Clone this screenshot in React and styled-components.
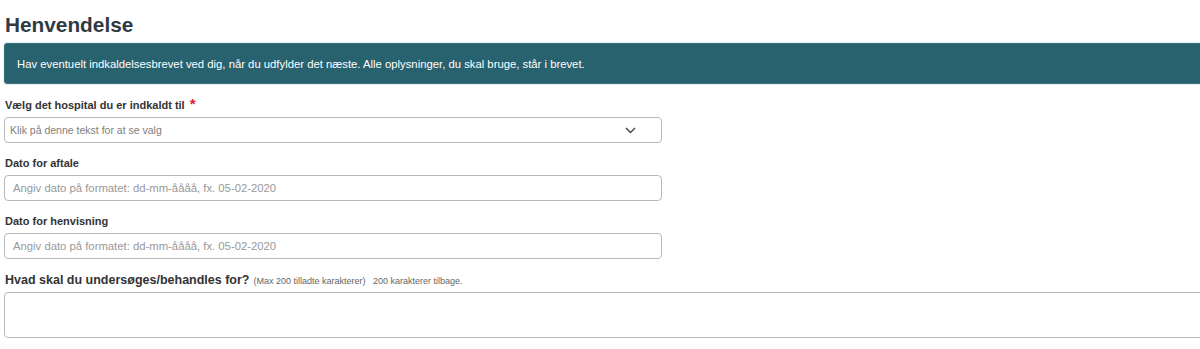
import React from "react";
import styled, { createGlobalStyle } from "styled-components";

const GlobalStyle = createGlobalStyle`
  html, body {
    margin: 0;
    padding: 0;
    background: #fff;
    font-family: "Liberation Sans", Arial, sans-serif;
    color: #333;
  }
  * {
    box-sizing: border-box;
  }
`;

const Page = styled.main`
  padding: 13px 0 0 4px;
  width: 1210px;
`;

const Heading = styled.h1`
  margin: 0 0 6px 1px;
  font-size: 20.8px;
  line-height: 24px;
  font-weight: bold;
  color: #2f3a44;
`;

const Banner = styled.div`
  height: 41px;
  display: flex;
  align-items: center;
  padding: 0 12px;
  background-color: #28626f;
  border: 1px solid #3d6f7a;
  border-radius: 3px;
  box-shadow: 0 0 0 1px #dff3f6;
  color: #fff;
  font-size: 11.3px;
`;

const Form = styled.form`
  display: flex;
  flex-direction: column;
  gap: 12px;
  margin-top: 13px;
`;

const Field = styled.div`
  display: flex;
  flex-direction: column;
  gap: 5px;
`;

const Label = styled.label`
  display: flex;
  align-items: baseline;
  margin-left: 1px;
  margin-top: ${({ $big }) => ($big ? "2px" : "1px")};
  margin-bottom: ${({ $big }) => ($big ? "-2px" : "-1px")};
  font-size: ${({ $big }) => ($big ? "12.5px" : "11px")};
  line-height: 15px;
  font-weight: bold;
  color: #333;
`;

const Required = styled.span`
  margin-left: 5px;
  color: #d9232e;
  font-size: 15px;
  line-height: 10px;
`;

const Hint = styled.span`
  margin-left: 4px;
  font-size: 9px;
  font-weight: normal;
  color: #666;
  white-space: pre;
`;

const Box = styled.div`
  width: ${({ $full }) => ($full ? "100%" : "658px")};
  height: ${({ $tall }) => ($tall ? "46px" : "26px")};
  display: flex;
  align-items: center;
  justify-content: space-between;
  padding: ${({ $select }) => ($select ? "0 25px 0 5px" : "0 8px")};
  border: 1px solid #b9b9b9;
  border-radius: 4px;
  background: #fff;
  font-size: ${({ $select }) => ($select ? "10.5px" : "11.3px")};
  color: ${({ $select }) => ($select ? "#808080" : "#999")};
`;

const Chevron = () => (
  <svg width="11" height="7" viewBox="0 0 11 7" fill="none">
    <path d="M1 1l4.5 4.5L10 1" stroke="#444" strokeWidth="1.4" />
  </svg>
);

export default function App() {
  return (
    <>
      <GlobalStyle />
      <Page>
        <Heading>Henvendelse</Heading>
        <Banner>
          Hav eventuelt indkaldelsesbrevet ved dig, når du udfylder det næste. Alle oplysninger, du skal bruge, står i brevet.
        </Banner>
        <Form>
          <Field>
            <Label>
              Vælg det hospital du er indkaldt til<Required>*</Required>
            </Label>
            <Box $select>
              Klik på denne tekst for at se valg
              <Chevron />
            </Box>
          </Field>
          <Field>
            <Label>Dato for aftale</Label>
            <Box>Angiv dato på formatet: dd-mm-åååå, fx. 05-02-2020</Box>
          </Field>
          <Field>
            <Label>Dato for henvisning</Label>
            <Box>Angiv dato på formatet: dd-mm-åååå, fx. 05-02-2020</Box>
          </Field>
          <Field>
            <Label $big>
              Hvad skal du undersøges/behandles for?
              <Hint>(Max 200 tilladte karakterer)   200 karakterer tilbage.</Hint>
            </Label>
            <Box $full $tall />
          </Field>
        </Form>
      </Page>
    </>
  );
}
